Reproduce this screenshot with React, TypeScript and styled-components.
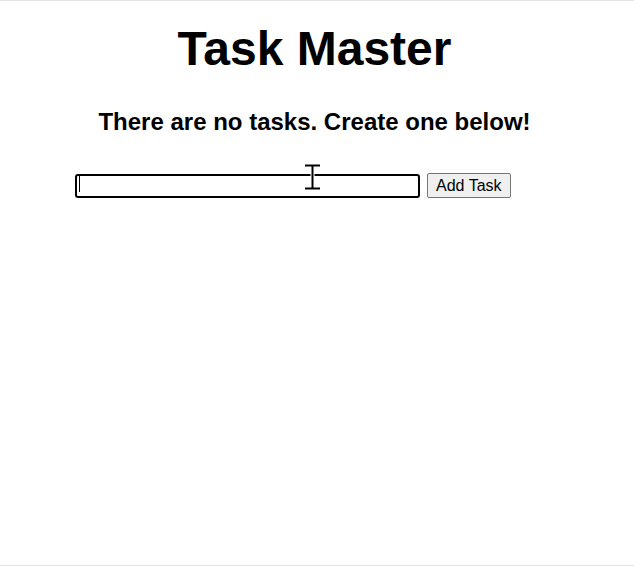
import { FC, useState } from 'react';
import styled, { createGlobalStyle } from 'styled-components';

const GlobalStyle = createGlobalStyle`
  html, body {
    margin: 0;
    padding: 0;
    background: #fff;
  }
  body {
    font-family: "Liberation Sans", Arial, sans-serif;
  }
`;

const Page = styled.div`
  position: relative;
  box-sizing: border-box;
  height: 566px;
  padding-right: 5px;
  border-top: 1px solid #e3e3e3;
  border-bottom: 1px solid #e3e3e3;
  color: #000;
`;

const Title = styled.h1`
  margin: 20px 0 0;
  font-size: 48px;
  line-height: 56px;
  font-weight: bold;
  text-align: center;
`;

const Empty = styled.h2`
  margin: 31px 0 0;
  font-size: 24px;
  line-height: 28px;
  font-weight: bold;
  text-align: center;
`;

const Form = styled.form`
  position: relative;
  display: flex;
  align-items: center;
  gap: 7px;
  margin: 37px 0 0 75px;
`;

const TaskInput = styled.input`
  box-sizing: border-box;
  width: 345px;
  height: 24px;
  padding: 1px 3px;
  border: 2px solid #000;
  border-radius: 3px;
  outline: none;
  caret-color: transparent;
  font: 16px "Liberation Sans", Arial, sans-serif;
`;

const Caret = styled.span`
  position: absolute;
  left: 4px;
  top: 3px;
  width: 1px;
  height: 16px;
  background: #000;
  pointer-events: none;
`;

const AddButton = styled.button`
  box-sizing: border-box;
  height: 25px;
  padding: 1px 8px;
  border: 1px solid #767676;
  border-radius: 2px;
  background: #efefef;
  color: #000;
  font: 16px "Liberation Sans", Arial, sans-serif;
`;

const Cursor = styled.svg`
  position: absolute;
  left: 303px;
  top: 162px;
  pointer-events: none;
`;

const IBeam: FC = () => (
  <Cursor width="19" height="28" viewBox="0 0 19 28">
    <path d="M1 2.5h17M9.5 2.5v23M1 25.5h17" stroke="#fff" strokeWidth="4" fill="none" />
    <path d="M2 2.5h15M9.5 2.5v23M2 25.5h15" stroke="#000" strokeWidth="2" fill="none" />
  </Cursor>
);

const App: FC = () => {
  const [text, setText] = useState('');

  return (
    <Page>
      <GlobalStyle />
      <Title>Task Master</Title>
      <Empty>There are no tasks. Create one below!</Empty>
      <Form onSubmit={(e) => e.preventDefault()}>
        <TaskInput type="text" value={text} onChange={(e) => setText(e.target.value)} autoFocus />
        {text === '' && <Caret />}
        <AddButton type="submit">Add Task</AddButton>
      </Form>
      <IBeam />
    </Page>
  );
};

export default App;
